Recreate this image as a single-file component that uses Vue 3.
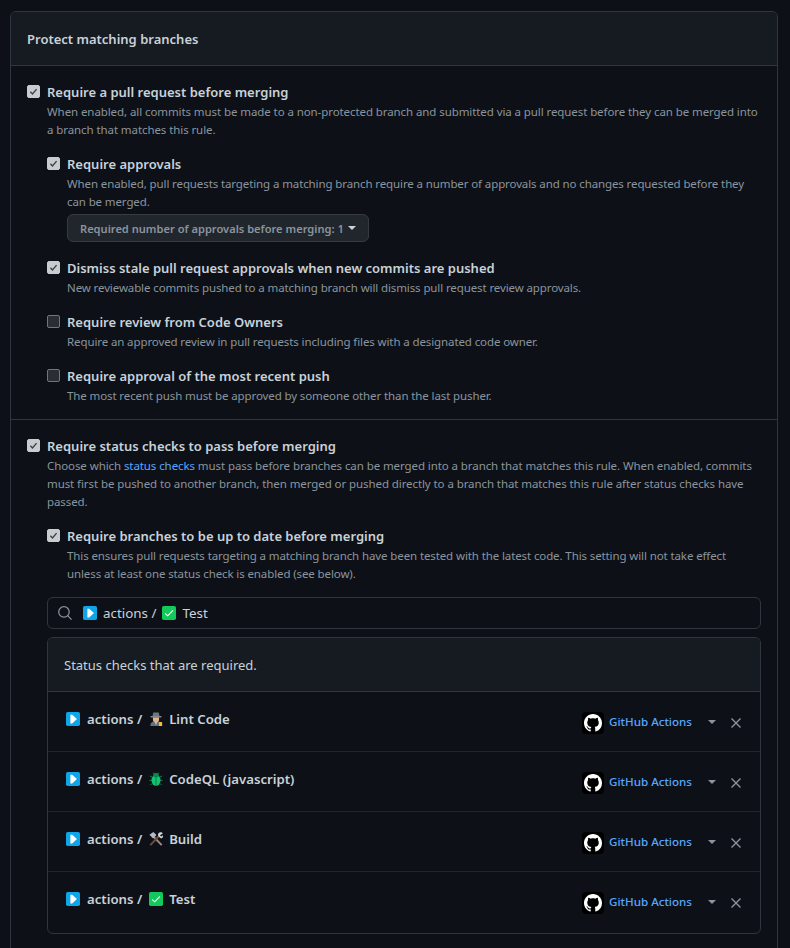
<script setup>
const checks = [
  { name: 'Lint Code', icon: 'spy' },
  { name: 'CodeQL (javascript)', icon: 'bug' },
  { name: 'Build', icon: 'tools' },
  { name: 'Test', icon: 'check' },
]
</script>

<template>
  <div class="page">
    <section class="panel">
      <header class="panel-head">Protect matching branches</header>

      <div class="section first">
        <div class="opt">
          <span class="cb on"><svg viewBox="0 0 16 16"><path d="M3.5 8.5 6.5 11.5 12.5 4.5" /></svg></span>
          <div>
            <div class="label">Require a pull request before merging</div>
            <p class="desc">When enabled, all commits must be made to a non-protected branch and submitted via a pull request before they can be merged into<br>a branch that matches this rule.</p>
          </div>
        </div>
        <div class="nested">
          <div class="opt">
            <span class="cb on"><svg viewBox="0 0 16 16"><path d="M3.5 8.5 6.5 11.5 12.5 4.5" /></svg></span>
            <div>
              <div class="label">Require approvals</div>
              <p class="desc">When enabled, pull requests targeting a matching branch require a number of approvals and no changes requested before they<br>can be merged.</p>
              <button class="select">Required number of approvals before merging: 1<i class="caret"></i></button>
            </div>
          </div>
          <div class="opt">
            <span class="cb on"><svg viewBox="0 0 16 16"><path d="M3.5 8.5 6.5 11.5 12.5 4.5" /></svg></span>
            <div>
              <div class="label">Dismiss stale pull request approvals when new commits are pushed</div>
              <p class="desc">New reviewable commits pushed to a matching branch will dismiss pull request review approvals.</p>
            </div>
          </div>
          <div class="opt">
            <span class="cb"></span>
            <div>
              <div class="label">Require review from Code Owners</div>
              <p class="desc">Require an approved review in pull requests including files with a designated code owner.</p>
            </div>
          </div>
          <div class="opt">
            <span class="cb"></span>
            <div>
              <div class="label">Require approval of the most recent push</div>
              <p class="desc">The most recent push must be approved by someone other than the last pusher.</p>
            </div>
          </div>
        </div>
      </div>

      <div class="section second">
        <div class="opt">
          <span class="cb on"><svg viewBox="0 0 16 16"><path d="M3.5 8.5 6.5 11.5 12.5 4.5" /></svg></span>
          <div>
            <div class="label">Require status checks to pass before merging</div>
            <p class="desc">Choose which <a>status checks</a> must pass before branches can be merged into a branch that matches this rule. When enabled, commits<br>must first be pushed to another branch, then merged or pushed directly to a branch that matches this rule after status checks have<br>passed.</p>
          </div>
        </div>
        <div class="nested">
          <div class="opt">
            <span class="cb on"><svg viewBox="0 0 16 16"><path d="M3.5 8.5 6.5 11.5 12.5 4.5" /></svg></span>
            <div>
              <div class="label">Require branches to be up to date before merging</div>
              <p class="desc">This ensures pull requests targeting a matching branch have been tested with the latest code. This setting will not take effect<br>unless at least one status check is enabled (see below).</p>
            </div>
          </div>
        </div>

        <div class="search">
          <svg class="mag" viewBox="0 0 16 16"><circle cx="6.8" cy="6.8" r="6" /><path d="M11 11l4.500 4.500" /></svg>
          <svg class="emoji" viewBox="0 0 16 16"><rect width="16" height="16" rx="2" fill="#0ea5e9" /><path d="M5 3h2l5.500 5L7 13H5z" fill="#fff" /></svg>
          <span class="search-text">actions /</span>
          <svg class="emoji" viewBox="0 0 16 16"><rect width="16" height="16" rx="2" fill="#12c95c" /><path d="M3.500 8.500 6.500 11.200 12.500 5" fill="none" stroke="#fff" stroke-width="1.200" /></svg>
          <span class="search-text">Test</span>
        </div>

        <div class="checks">
          <div class="checks-head">Status checks that are required.</div>
          <div v-for="c in checks" :key="c.name" class="row">
            <div class="row-name">
              <svg class="emoji lead" viewBox="0 0 16 16"><rect width="16" height="16" rx="2" fill="#0ea5e9" /><path d="M5 3h2l5.500 5L7 13H5z" fill="#fff" /></svg>
              <span class="prefix">actions /</span>
              <svg v-if="c.icon === 'spy'" class="emoji" viewBox="0 0 16 16">
                <path d="M1.500 16c0-4 2.500-5.500 6.500-5.500s6.500 1.500 6.500 5.500z" fill="#66717c" />
                <path d="M6.800 10.500h2.400L8 15z" fill="#e8edf0" />
                <path d="M4.500 6h7v2.800c0 2-1.500 3-3.500 3s-3.500-1-3.500-3z" fill="#e3b57e" />
                <path d="M4.800 .5h6.400l.8 4.500H4z" fill="#6b7680" />
                <rect x="1.500" y="4.500" width="13" height="1.800" rx=".9" fill="#7d8892" />
                <rect x="11.500" y="11.500" width="3.500" height="4.500" fill="#f2c230" />
              </svg>
              <svg v-else-if="c.icon === 'bug'" class="emoji" viewBox="0 0 16 16">
                <g stroke="#0c8a50" stroke-width="1.100" fill="none"><path d="M3.500 6 1 4.500M3 9.500H.5M3.500 13 1.500 15M12.500 6 15 4.500M13 9.500h2.500M12.500 13l2 2M6 2.500 5 .8M10 2.500 11 .8" /></g>
                <ellipse cx="8" cy="9.500" rx="5.200" ry="6.200" fill="#14c26f" />
                <ellipse cx="8" cy="3.600" rx="3.200" ry="2.400" fill="#0c8a50" />
                <path d="M8 4v11.500" stroke="#0a6f42" stroke-width=".9" />
              </svg>
              <svg v-else-if="c.icon === 'tools'" class="emoji" viewBox="0 0 16 16">
                <path d="M4 4 14.500 15" stroke="#a1887f" stroke-width="2.200" />
                <path d="M12 4 1.500 15" stroke="#6d4c41" stroke-width="2.200" />
                <path d="M.5 3 5 0l3.500 3.500-3.800 4z" fill="#b4bdc4" />
                <path d="M15.800 1.800c-1-2-4.300-2.200-5.300.3-.5 1.300 0 2.300.5 3l2.500 2c1.500.3 2.700-1 2.500-3.300l-2 1.200-1.500-1.200z" fill="#d0d7dc" />
              </svg>
              <svg v-else class="emoji" viewBox="0 0 16 16"><rect width="16" height="16" rx="2" fill="#12c95c" /><path d="M3.500 8.500 6.500 11.200 12.500 5" fill="none" stroke="#fff" stroke-width="1.200" /></svg>
              <span>{{ c.name }}</span>
            </div>
            <div class="row-side">
              <span class="avatar">
                <svg viewBox="0 0 16 16"><path fill="#fff" d="M8 0C3.580 0 0 3.580 0 8c0 3.540 2.290 6.530 5.470 7.590.4.070.55-.170.55-.380 0-.190-.010-.820-.010-1.490-2.010.370-2.530-.490-2.690-.940-.090-.230-.480-.940-.820-1.130-.280-.150-.680-.520-.010-.530.630-.010 1.080.580 1.230.820.720 1.210 1.870.870 2.330.660.070-.520.280-.870.510-1.070-1.780-.200-3.640-.890-3.640-3.950 0-.870.310-1.590.820-2.150-.080-.200-.360-1.020.080-2.120 0 0 .670-.210 2.200.820.640-.180 1.320-.270 2-.270s1.360.090 2 .270c1.530-1.040 2.200-.820 2.200-.820.440 1.100.160 1.920.080 2.120.510.560.820 1.270.820 2.150 0 3.070-1.870 3.750-3.650 3.950.290.250.540.730.540 1.480 0 1.070-.010 1.930-.010 2.200 0 .210.150.460.550.380A8.010 8.010 0 0 0 16 8c0-4.420-3.580-8-8-8z" /></svg>
              </span>
              <a class="app">GitHub Actions</a>
              <i class="caret muted"></i>
              <svg class="close" viewBox="0 0 16 16"><path d="M3.500 3.500l9 9M12.500 3.500l-9 9" /></svg>
            </div>
          </div>
        </div>
      </div>
    </section>
  </div>
</template>

<style>
html, body { margin: 0; background: #0d1117; }
</style>

<style scoped>
.page {
  width: 790px;
  height: 948px;
  overflow: hidden;
  box-sizing: border-box;
  padding: 11px 12px 0 10px;
  background: #0d1117;
  color: #c9d1d9;
  font-family: "Noto Sans", "Open Sans", sans-serif;
  font-size: 12px;
}
.panel {
  border: 1px solid #30363d;
  border-radius: 6px;
  height: 960px;
  box-sizing: border-box;
}
.panel-head {
  height: 53px;
  display: flex;
  align-items: center;
  padding-left: 16px;
  background: #161b22;
  border-bottom: 1px solid #30363d;
  border-radius: 6px 6px 0 0;
  font-size: 13px;
  font-weight: 600;
}
.section { padding: 0 16px; }
.section.first { padding-top: 16px; padding-bottom: 14px; border-bottom: 1px solid #30363d; }
.section.second { padding-top: 16px; }
.opt { display: flex; gap: 7px; }
.nested { padding: 15px 0 0 20px; display: flex; flex-direction: column; gap: 15px; }
.cb {
  flex: none;
  width: 13px;
  height: 13px;
  margin-top: 3px;
  border-radius: 2px;
  background: #2a2e33;
  border: 1px solid #6e7681;
  box-sizing: border-box;
}
.cb.on { background: #c9cccf; border-color: #c9cccf; }
.cb svg { display: block; width: 11px; height: 11px; fill: none; stroke: #3c4046; stroke-width: 2; }
.label { font-size: 13px; font-weight: 600; line-height: 20px; white-space: nowrap; }
.desc { margin: 1px 0 0; line-height: 18px; color: #8b949e; white-space: nowrap; font-size: 11.500px; letter-spacing: -0.085px; }
.nested .desc { letter-spacing: -0.11px; }
.desc a { color: #58a6ff; }
.select {
  display: flex;
  align-items: center;
  height: 28px;
  margin: 3px 0 1px;
  padding: 0 12px;
  border: 1px solid #363b42;
  border-radius: 6px;
  background: #21262d;
  color: #8b949e;
  font: 600 11.100px "Noto Sans", sans-serif;
}
.caret {
  display: inline-block;
  width: 0;
  height: 0;
  margin-left: 4px;
  border: 4px solid transparent;
  border-top-color: #c9d1d9;
  border-bottom: 0;
}
.caret.muted { border-top-color: #8b949e; }
.search {
  display: flex;
  align-items: center;
  height: 32px;
  box-sizing: border-box;
  margin: 14px 0 0 20px;
  padding-left: 10px;
  border: 1px solid #30363d;
  border-radius: 6px;
  width: 714px;
}
.mag { width: 14px; height: 14px; fill: none; stroke: #8b949e; stroke-width: 1.400; margin-right: 11px; }
.emoji { width: 14px; height: 14px; flex: none; display: block; }
.search-text { font-size: 13.400px; margin: 0 6px; color: #c9d1d9; }
.checks {
  margin: 8px 0 0 20px;
  width: 714px;
  height: 297px;
  box-sizing: border-box;
  border: 1px solid #30363d;
  border-radius: 6px;
  overflow: hidden;
}
.checks-head {
  height: 53px;
  display: flex;
  align-items: center;
  padding-left: 16px;
  background: #161b22;
  border-bottom: 1px solid #30363d;
  font-size: 13px;
}
.row {
  display: flex;
  justify-content: space-between;
  height: 59px;
  box-sizing: content-box;
  border-bottom: 1px solid #21262d;
  padding: 0 16px 0 18px;
}
.row:last-child { border-bottom: 0; }
.row-name { display: flex; align-items: center; gap: 6px; height: 54px; font-size: 13.200px; font-weight: 600; }
.row-name .lead, .row-name .prefix { margin-right: 1px; }
.row-side { display: flex; align-items: center; height: 61px; }
.avatar {
  width: 22px;
  height: 22px;
  border-radius: 4px;
  background: #000;
  display: flex;
  align-items: center;
  justify-content: center;
  margin-right: 5px;
}
.avatar svg { width: 18px; height: 18px; }
.app { color: #58a6ff; font-size: 11.600px; font-weight: 500; margin-top: -2px; margin-right: 1px; }
.row-side .caret { margin-left: 15px; margin-top: -2px; }
.close { width: 16px; height: 16px; margin-left: 12px; fill: none; stroke: #8b949e; stroke-width: 1.400; }
</style>
